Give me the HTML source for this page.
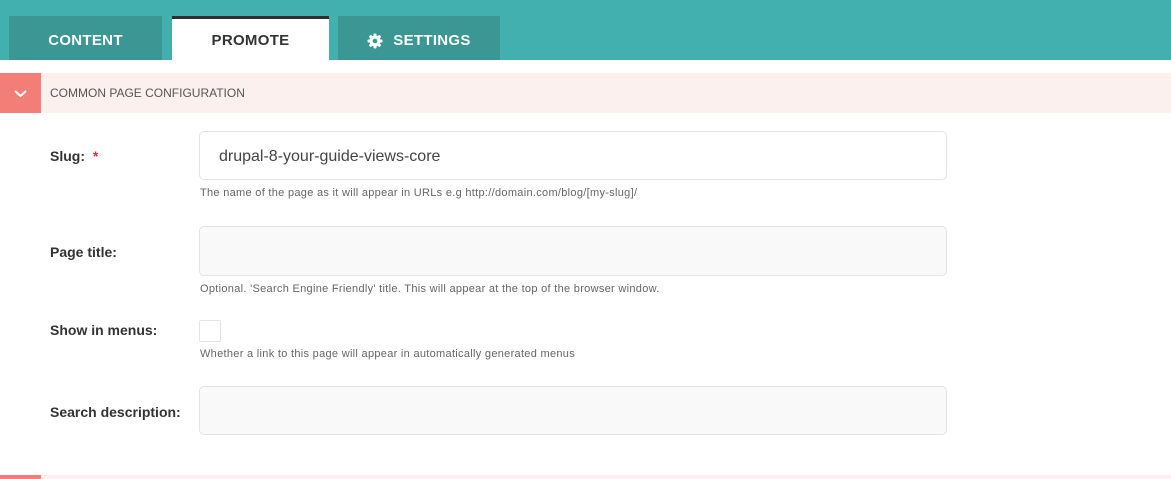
<!DOCTYPE html><html><head><style>
body{margin:0;width:1171px;height:479px;overflow:hidden;background:#fff;font-family:"Liberation Sans",sans-serif;position:relative}
.top{position:absolute;left:0;top:0;width:1171px;height:60px;background:#43b0b0}
.tab{position:absolute;top:16px;height:44px;background:#3a9794;color:#fff;font-weight:bold;font-size:15px;display:flex;align-items:center;justify-content:center;letter-spacing:.3px;padding-top:5px;box-sizing:border-box}
.act{background:#fff;color:#333;border-top:3px solid #2f2f2f;padding-top:2px}
.bar{position:absolute;left:0;top:73px;width:1171px;height:40px;background:#fbf0ee}
.sq{position:absolute;left:0;top:0;width:41px;height:40px;background:#f37e77}
.bar span{position:absolute;left:50px;top:13px;font-size:12px;color:#555}
.lbl{position:absolute;left:50px;font-weight:bold;font-size:14px;color:#333}
.in{position:absolute;left:199px;width:748px;border:1px solid #e3e3e3;border-radius:5px;background:#f9f9f9;box-sizing:border-box}
.help{position:absolute;left:200px;font-size:11px;letter-spacing:.3px;color:#666}
</style></head><body>
<div class="top"></div>
<div class="tab" style="left:9px;width:153px">CONTENT</div>
<div class="tab act" style="left:172px;width:157px">PROMOTE</div>
<div class="tab" style="left:338px;width:162px"><svg width="16" height="16" viewBox="0 0 16 16" style="margin-right:10px"><g fill="#fff"><circle cx="8" cy="8" r="5.5"/><rect x="6.5" y="0.5" width="3" height="15" rx="1"/><rect x="0.5" y="6.5" width="15" height="3" rx="1"/><rect x="6.5" y="0.5" width="3" height="15" rx="1" transform="rotate(45 8 8)"/><rect x="6.5" y="0.5" width="3" height="15" rx="1" transform="rotate(-45 8 8)"/></g><circle cx="8" cy="8" r="2.3" fill="#3a9794"/></svg>SETTINGS</div>
<div class="bar"><div class="sq"><svg width="41" height="40"><path d="M15 18l5.5 5 5.5-5" stroke="#fff" stroke-width="2" fill="none"/></svg></div><span>COMMON PAGE CONFIGURATION</span></div>
<div class="lbl" style="top:148px">Slug: <span style="color:#d33;margin-left:4px">*</span></div>
<div class="in" style="top:131px;height:49px;background:#fff;font-size:16px;color:#444;padding:16px 0 0 19px">drupal-8-your-guide-views-core</div>
<div class="help" style="top:187px">The name of the page as it will appear in URLs e.g http://domain.com/blog/[my-slug]/</div>
<div class="lbl" style="top:244px">Page title:</div>
<div class="in" style="top:226px;height:50px"></div>
<div class="help" style="top:283px">Optional. 'Search Engine Friendly' title. This will appear at the top of the browser window.</div>
<div class="lbl" style="top:322px">Show in menus:</div>
<div class="in" style="top:320px;width:22px;height:22px;border-radius:2px;background:#fff"></div>
<div class="help" style="top:348px">Whether a link to this page will appear in automatically generated menus</div>
<div class="lbl" style="top:404px">Search description:</div>
<div class="in" style="top:386px;height:49px"></div>
<div style="position:absolute;left:0;top:475px;width:1171px;height:4px;background:#fbf0ee"></div>
<div style="position:absolute;left:0;top:475px;width:41px;height:4px;background:#f37e77"></div>
</body></html>
